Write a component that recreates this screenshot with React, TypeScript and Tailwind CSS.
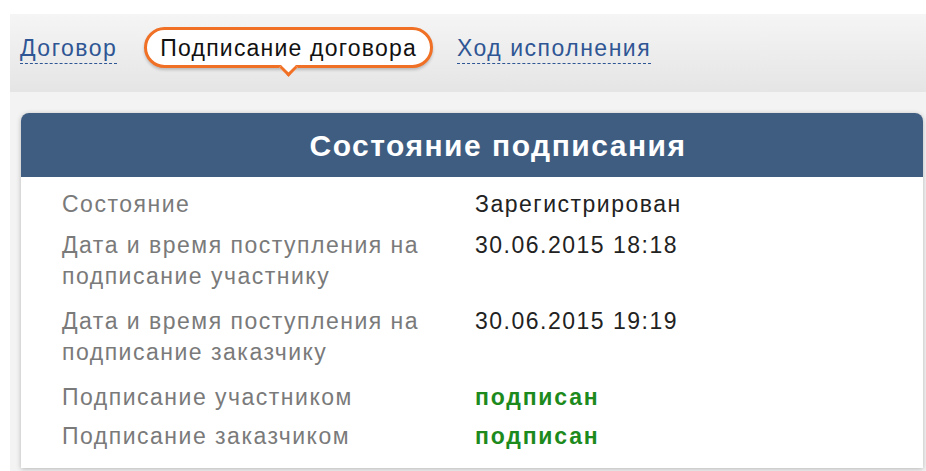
import React from "react";

type Row = { label: string[]; value: string; ok?: boolean; mt: string };

const rows: Row[] = [
  { label: ["Состояние"], value: "Зарегистрирован", mt: "mt-0" },
  { label: ["Дата и время поступления на", "подписание участнику"], value: "30.06.2015 18:18", mt: "mt-[10px]" },
  { label: ["Дата и время поступления на", "подписание заказчику"], value: "30.06.2015 19:19", mt: "mt-[14px]" },
  { label: ["Подписание участником"], value: "подписан", ok: true, mt: "mt-[14px]" },
  { label: ["Подписание заказчиком"], value: "подписан", ok: true, mt: "mt-[8px]" },
];

function TabLink({ children }: { children: React.ReactNode }) {
  return (
    <span className="text-[#2f5694] text-[23px] tracking-[1.5px] leading-[26px] border-b border-dashed border-[#2f5694] pb-[2px] mt-[4px] cursor-pointer">
      {children}
    </span>
  );
}

export default function App() {
  return (
    <div className="w-[926px] h-[471px] overflow-hidden bg-white font-['Liberation_Sans',Arial,sans-serif]">
      <div className="ml-[10px] mt-[14px] h-[457px] bg-[#f3f3f3]">
        {/* tab strip */}
        <div className="h-[78px] bg-gradient-to-b from-[#f5f5f5] to-[#e5e5e5] flex items-start pt-[13px] pl-[10px]">
          <div className="h-[41px] flex items-center">
            <TabLink>Договор</TabLink>
          </div>
          <div className="relative ml-[27px] h-[41px] px-[13px] flex items-center rounded-full border-[3px] border-[#f07025] bg-white shadow-[0_2px_3px_rgba(0,0,0,0.2)]">
            <span className="text-[#111] text-[23px] tracking-[1.2px] leading-[26px]">Подписание договора</span>
            <span className="absolute left-1/2 -bottom-[9px] -ml-[7px] w-[13px] h-[13px] rotate-45 bg-white border-r-[3px] border-b-[3px] border-[#f07025]" />
          </div>
          <div className="ml-[24px] h-[41px] flex items-center">
            <TabLink>Ход исполнения</TabLink>
          </div>
        </div>

        {/* signing status panel */}
        <div className="pt-[21px] pl-[11px] pr-[3px]">
          <div className="rounded-t-[8px] shadow-[0_1px_5px_rgba(0,0,0,0.25)]">
            <div className="h-[64px] rounded-t-[8px] bg-[#3e5d81] flex items-center justify-center pl-[52px]">
              <span className="text-white font-bold text-[30px] tracking-[1.5px]">Состояние подписания</span>
            </div>
            <div className="h-[291px] bg-white pt-[12px] pl-[41px]">
              <div className="flex flex-col text-[23px] leading-[31px] tracking-[1.5px]">
                {rows.map((r, i) => (
                  <div key={i} className={`flex ${r.mt}`}>
                    <div className="w-[413px] text-[#7a7a7a]">
                      {r.label.map((l, j) => (
                        <div key={j}>{l}</div>
                      ))}
                    </div>
                    <div className={r.ok ? "text-[#1d8a1d] font-bold tracking-[1.8px]" : "text-[#222]"}>{r.value}</div>
                  </div>
                ))}
              </div>
            </div>
          </div>
        </div>
      </div>
    </div>
  );
}
